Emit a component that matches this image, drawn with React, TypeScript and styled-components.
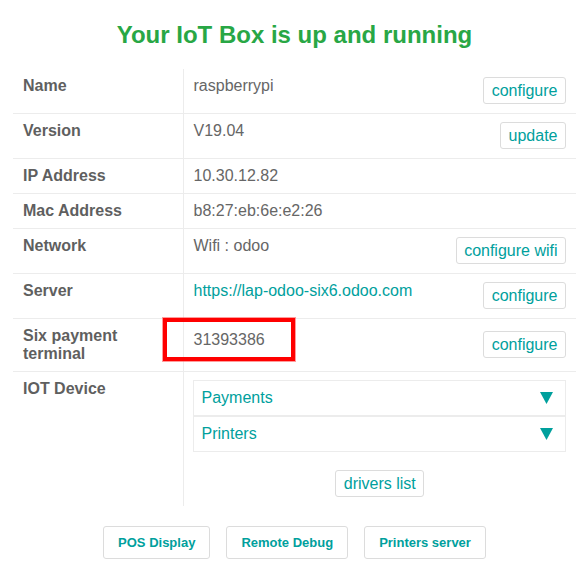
import React from "react";
import styled, { createGlobalStyle } from "styled-components";

const Global = createGlobalStyle`
  html, body { margin: 0; padding: 0; background: #fff; }
  body { font-family: "Liberation Sans", Arial, sans-serif; color: #666; }
  * { box-sizing: border-box; }
`;

const TEAL = "#00a09d";

const Page = styled.div`
  width: 584px;
  padding: 21px 8px 0 13px;
`;

const Title = styled.h1`
  margin: 0 0 20px;
  font-size: 24px;
  line-height: 28px;
  font-weight: bold;
  color: #28a745;
  text-align: center;
`;

const Table = styled.table`
  width: 563px;
  border-collapse: collapse;
  font-size: 16px;
  line-height: 17px;
`;

const Row = styled.tr`
  border-bottom: 1px solid #ececec;
  &:last-child { border-bottom: none; }
`;

const Label = styled.td<{ $multi?: boolean }>`
  width: 170px;
  padding: 8px 10px 9px;
  vertical-align: top;
  font-weight: bold;
  line-height: ${(p) => (p.$multi ? "17.6px" : "17px")};
  color: #5f5f5f;
  border-right: 1px solid #ececec;
`;

const Value = styled.td`
  padding: 8px 10px 9px;
  vertical-align: middle;
  color: #666;
`;

const ValueLine = styled.div`
  display: flex;
  justify-content: space-between;
  align-items: flex-start;
`;

const Text = styled.span<{ $link?: boolean }>`
  position: relative;
  color: ${(p) => (p.$link ? TEAL : "#666")};
`;

const Highlight = styled.span`
  position: absolute;
  left: -31px;
  top: -13px;
  width: 132px;
  height: 43px;
  border: 4px solid #ff0000;
  box-shadow: 0 0 0 1px rgba(255, 90, 90, 0.6);
  pointer-events: none;
`;

const Btn = styled.button`
  font-family: inherit;
  font-size: 16px;
  line-height: 17px;
  padding: 4px 7.5px;
  color: ${TEAL};
  background: #fff;
  border: 1px solid #dcdcdc;
  border-radius: 3px;
  cursor: pointer;
  white-space: nowrap;
`;

const Accordion = styled.div`
  margin: 0 0 18px -1px;
`;

const AccItem = styled.div`
  display: flex;
  justify-content: space-between;
  align-items: center;
  border: 1px solid #ececec;
  padding: 8px 12px 8px 8px;
  line-height: 18px;
  color: ${TEAL};
`;

const Arrow = styled.svg`
  width: 13px;
  height: 12px;
  display: block;
`;

const Center = styled.div`
  display: flex;
  justify-content: center;
`;

const Footer = styled.div`
  display: flex;
  justify-content: center;
  gap: 16px;
  margin-top: 20px;
`;

const FooterBtn = styled.button`
  font-family: inherit;
  font-size: 13px;
  font-weight: bold;
  line-height: 16px;
  padding: 7.5px 14px;
  color: ${TEAL};
  background: #fff;
  border: 1px solid #dcdcdc;
  border-radius: 3px;
  cursor: pointer;
`;

type Info = { label: string; value: string; button?: string; link?: boolean; mark?: boolean };

const rows: Info[] = [
  { label: "Name", value: "raspberrypi", button: "configure" },
  { label: "Version", value: "V19.04", button: "update" },
  { label: "IP Address", value: "10.30.12.82" },
  { label: "Mac Address", value: "b8:27:eb:6e:e2:26" },
  { label: "Network", value: "Wifi : odoo", button: "configure wifi" },
  { label: "Server", value: "https://lap-odoo-six6.odoo.com", button: "configure", link: true },
  { label: "Six payment terminal", value: "31393386", button: "configure", mark: true },
];

const Triangle = () => (
  <Arrow viewBox="0 0 13 12">
    <polygon points="0,0 13,0 6.5,12" fill={TEAL} />
  </Arrow>
);

export default function App() {
  return (
    <Page>
      <Global />
      <Title>Your IoT Box is up and running</Title>
      <Table>
        <tbody>
          {rows.map((r) => (
            <Row key={r.label}>
              <Label $multi={r.mark}>{r.label}</Label>
              <Value>
                <ValueLine>
                  <Text $link={r.link}>
                    {r.value}
                    {r.mark && <Highlight />}
                  </Text>
                  {r.button && <Btn>{r.button}</Btn>}
                </ValueLine>
              </Value>
            </Row>
          ))}
          <Row>
            <Label>IOT Device</Label>
            <Value>
              <Accordion>
                <AccItem>
                  <span>Payments</span>
                  <Triangle />
                </AccItem>
                <AccItem>
                  <span>Printers</span>
                  <Triangle />
                </AccItem>
              </Accordion>
              <Center>
                <Btn>drivers list</Btn>
              </Center>
            </Value>
          </Row>
        </tbody>
      </Table>
      <Footer>
        <FooterBtn>POS Display</FooterBtn>
        <FooterBtn>Remote Debug</FooterBtn>
        <FooterBtn>Printers server</FooterBtn>
      </Footer>
    </Page>
  );
}
